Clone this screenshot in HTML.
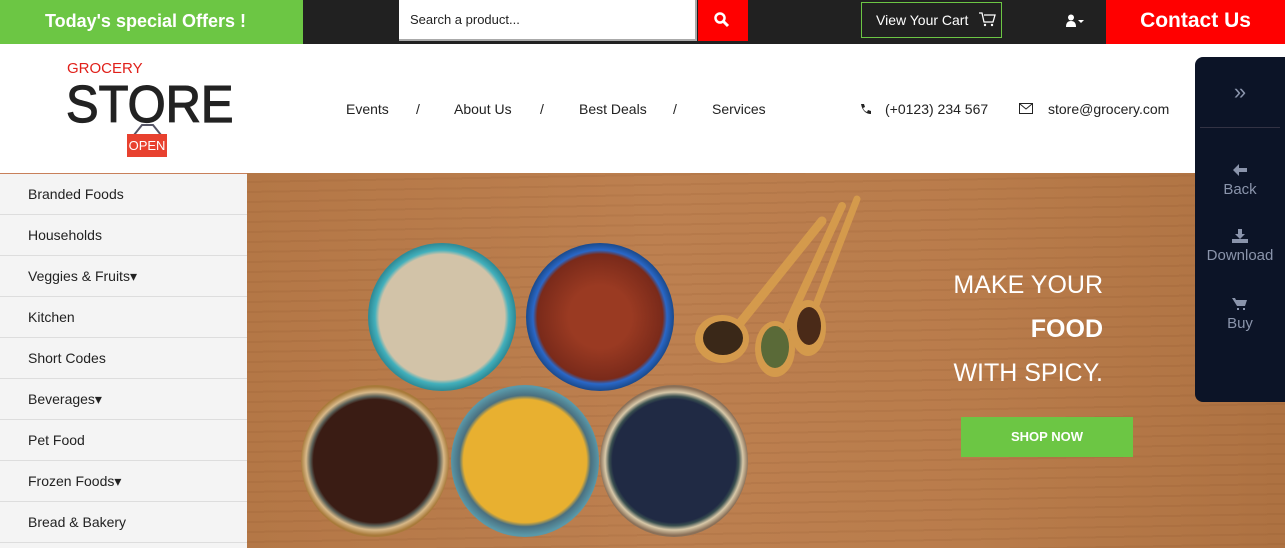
<!DOCTYPE html>
<html><head><meta charset="utf-8">
<style>
*{margin:0;padding:0;box-sizing:border-box}
body{width:1285px;height:548px;overflow:hidden;font-family:"Liberation Sans",sans-serif;background:#fff;position:relative}
.top{position:absolute;left:0;top:0;width:1285px;height:44px;background:#212121}
.offer{position:absolute;left:0;top:0;width:303px;height:44px;background:#6cc644;color:#fff;font-size:18px;font-weight:bold;line-height:42px;text-align:center;padding-right:12px}
.search{position:absolute;left:399px;top:0;width:298px;height:41px;background:#fff;border-right:2px solid #aaa;border-bottom:2px solid #aaa;font-size:13px;color:#222;line-height:40px;padding-left:11px}
.sbtn{position:absolute;left:698px;top:0;width:50px;height:41px;background:#f00}
.cart{position:absolute;left:861px;top:2px;width:141px;height:36px;border:1px solid #6cc644;color:#fff;font-size:14px;line-height:34px;padding-left:14px}
.contact{position:absolute;left:1106px;top:0;width:179px;height:44px;background:#f00;color:#fff;font-size:21px;font-weight:bold;line-height:42px;text-align:center}
.logo1{position:absolute;left:67px;top:60px;color:#e0201a;font-size:15px}
.logo2{position:absolute;left:66px;top:76px;color:#222;font-size:52px;line-height:58px;-webkit-text-stroke:1.2px #222;transform:scaleX(0.94);transform-origin:left}
.open{position:absolute;left:127px;top:134px;width:40px;height:23px;background:#e8412f;color:#fff;font-size:13px;text-align:center;line-height:23px}
.nav{position:absolute;top:101px;font-size:14px;color:#222}
.side{position:absolute;left:0;top:173px;width:247px;height:375px;background:#f4f4f4;border-top:1px solid #c8805a}
.side div{height:41px;border-bottom:1px solid #ddd;font-size:14px;color:#222;line-height:40px;padding-left:28px}
.banner{position:absolute;left:247px;top:173px;width:1038px;height:375px;background:repeating-linear-gradient(179deg,rgba(0,0,0,0) 0 8px,rgba(90,40,10,.07) 8px 10px),linear-gradient(90deg,#b47746,#bd8050 40%,#b97c4b 70%,#ae7242)}
.bowl{position:absolute;border-radius:50%}
.h{position:absolute;color:#fff;text-align:right;font-size:25px;right:182px}
.shop{position:absolute;left:961px;top:417px;width:172px;height:40px;background:#6cc644;color:#fff;font-weight:bold;font-size:13px;text-align:center;line-height:40px}
.panel{position:absolute;left:1195px;top:57px;width:90px;height:345px;background:#0c1427;border-radius:8px 0 0 8px;color:#8a94ab;text-align:center;font-size:15px}
</style></head><body>
<div class="top">
<div class="offer">Today's special Offers !</div>
<div class="search">Search a product...</div>
<div class="sbtn"><svg width="50" height="41"><circle cx="22" cy="18" r="4.5" fill="none" stroke="#fff" stroke-width="2.5"/><line x1="25" y1="21" x2="30" y2="26" stroke="#fff" stroke-width="3"/></svg></div>
<div class="cart">View Your Cart <svg width="18" height="16" style="vertical-align:-2px;margin-left:6px"><path d="M1 2h3l2 9h9l2-7H6" fill="none" stroke="#fff" stroke-width="1.3"/><circle cx="7" cy="14" r="1.2" fill="#fff"/><circle cx="14" cy="14" r="1.2" fill="#fff"/></svg></div>
<svg style="position:absolute;left:1066px;top:14px" width="20" height="14"><circle cx="5" cy="3.5" r="3" fill="#fff"/><path d="M0 13q0-6 5-6t5 6z" fill="#fff"/><path d="M12 6h6l-3 3z" fill="#fff"/></svg>
<div class="contact">Contact Us</div>
</div>
<div class="logo1">GROCERY</div>
<div class="logo2">STORE</div>
<svg style="position:absolute;left:130px;top:122px" width="36" height="14"><path d="M4 13l8-10h11l8 10" stroke="#556" stroke-width="2" fill="none"/></svg>
<div class="open">OPEN</div>
<div class="nav" style="left:346px">Events</div><div class="nav" style="left:416px">/</div>
<div class="nav" style="left:454px">About Us</div><div class="nav" style="left:540px">/</div>
<div class="nav" style="left:579px">Best Deals</div><div class="nav" style="left:673px">/</div>
<div class="nav" style="left:712px">Services</div>
<svg style="position:absolute;left:859px;top:103px" width="12" height="12"><path d="M2 1l3 0 1 3-2 1q1 3 4 4l1-2 3 1 0 3q-8 0-10-10z" fill="#222"/></svg>
<div class="nav" style="left:885px">(+0123) 234 567</div>
<svg style="position:absolute;left:1019px;top:103px" width="15" height="12"><rect x=".5" y=".5" width="13" height="10" fill="none" stroke="#222"/><path d="M1 1l6 5 6-5" fill="none" stroke="#222"/></svg>
<div class="nav" style="left:1048px">store@grocery.com</div>
<div class="side">
<div>Branded Foods</div><div>Households</div><div>Veggies &amp; Fruits&#9662;</div><div>Kitchen</div><div>Short Codes</div><div>Beverages&#9662;</div><div>Pet Food</div><div>Frozen Foods&#9662;</div><div>Bread &amp; Bakery</div>
</div>
<div class="banner">
<div class="bowl" style="left:121px;top:70px;width:148px;height:148px;background:radial-gradient(circle,#d2c3a8 0 60%,#42b0bc 64%,#2f8c98 70%)"></div>
<div class="bowl" style="left:279px;top:70px;width:148px;height:148px;background:radial-gradient(circle,#9a3a22 0 30%,#7a2a1a 60%,#2a68c8 64%,#1c4c90 70%)"></div>
<div class="bowl" style="left:54px;top:212px;width:148px;height:152px;background:radial-gradient(circle,#3a1c14 0 58%,#5a6058 61%,#d8b888 65%,#a87a3a 70%)"></div>
<div class="bowl" style="left:204px;top:212px;width:148px;height:152px;background:radial-gradient(circle,#e8b030 0 58%,#4a7080 62%,#5a98a8 70%)"></div>
<div class="bowl" style="left:353px;top:212px;width:148px;height:152px;background:radial-gradient(circle,#202a44 0 58%,#3a5050 61%,#d8c8a8 65%,#8a7058 70%)"></div>
<svg style="position:absolute;left:440px;top:20px" width="190" height="190"><g stroke="#d49a4c" stroke-linecap="round" fill="none"><path d="M135 28L45 140" stroke-width="9"/><path d="M155 13L92 150" stroke-width="8"/><path d="M170 6L124 125" stroke-width="7"/></g><ellipse cx="35" cy="146" rx="27" ry="24" fill="#d49a4c"/><ellipse cx="36" cy="145" rx="20" ry="17" fill="#3a2818"/><ellipse cx="88" cy="156" rx="20" ry="28" fill="#d49a4c"/><ellipse cx="88" cy="154" rx="14" ry="21" fill="#5a6a38"/><ellipse cx="121" cy="135" rx="18" ry="28" fill="#d49a4c"/><ellipse cx="122" cy="133" rx="12" ry="19" fill="#4a2a18"/></svg>
<div class="h" style="top:98px">MAKE YOUR</div>
<div class="h" style="top:142px;font-weight:bold">FOOD</div>
<div class="h" style="top:186px">WITH SPICY.</div>
</div>
<div class="shop">SHOP NOW</div>
<div class="panel">
<div style="position:absolute;top:22px;left:0;width:90px;font-size:22px">&raquo;</div>
<div style="position:absolute;top:70px;left:5px;width:80px;border-top:1px solid #334"></div>
<div style="position:absolute;top:106px;left:0;width:90px"><svg width="16" height="14"><path d="M1 7l6-6v4h8v4H7v4z" fill="#8a94ab"/></svg><br>Back</div>
<div style="position:absolute;top:172px;left:0;width:90px"><svg width="16" height="14"><path d="M6 0h4v5h3l-5 5-5-5h3zM0 10h16v4H0z" fill="#8a94ab"/></svg><br>Download</div>
<div style="position:absolute;top:240px;left:0;width:90px"><svg width="16" height="14"><path d="M0 1h3l1 2h11l-2 6H5zM5 11h2v2H5zM11 11h2v2h-2z" fill="#8a94ab"/></svg><br>Buy</div>
</div>
</body></html>
